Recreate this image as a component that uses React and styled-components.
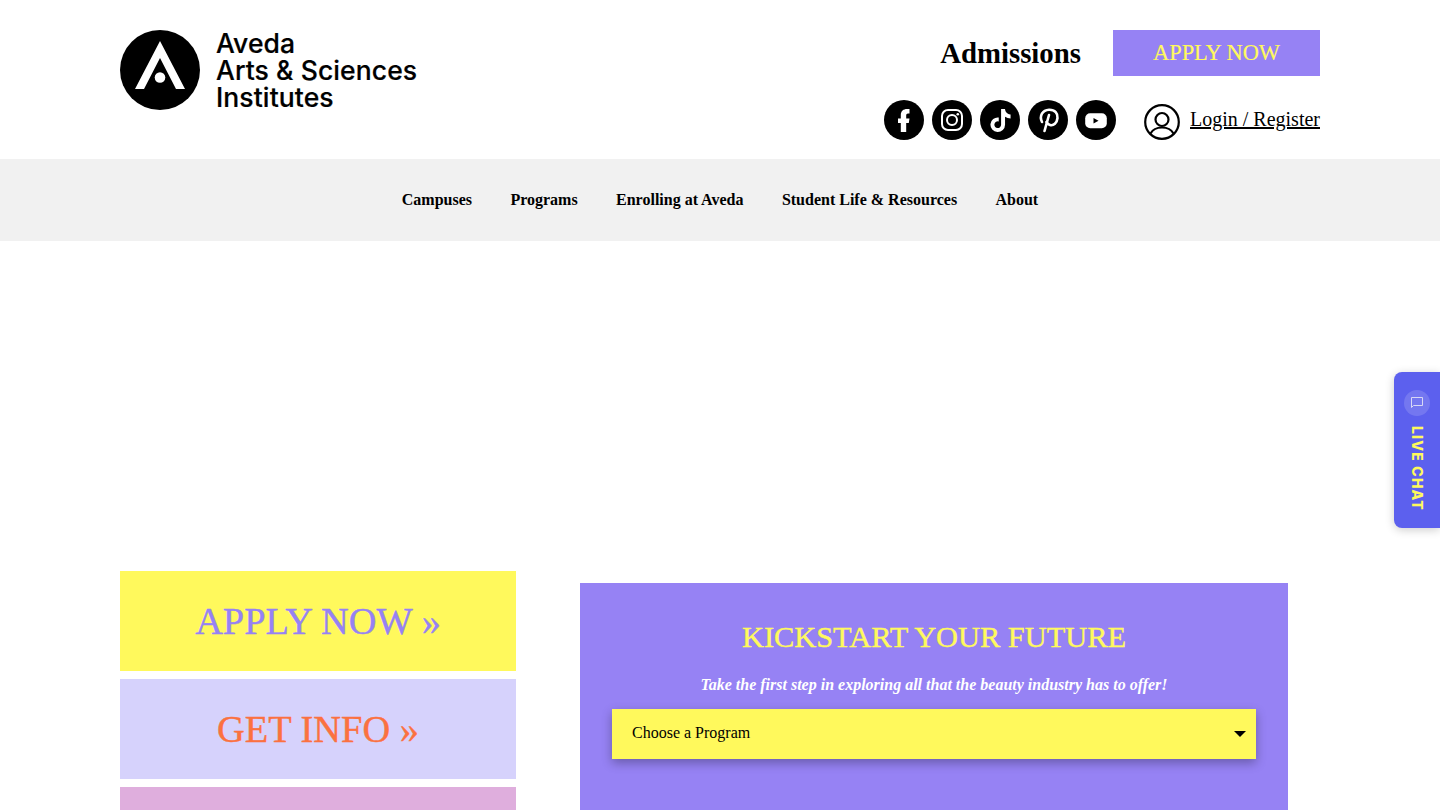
import React from "react";
import styled, { createGlobalStyle } from "styled-components";
import { FaTiktok } from "react-icons/fa";

const Global = createGlobalStyle`
  html, body {
    margin: 0;
    padding: 0;
    background: #fff;
    font-family: "Liberation Serif", "Times New Roman", serif;
    color: #000;
  }
`;

const Page = styled.div`
  height: 810px;
  overflow: hidden;
  position: relative;
`;

const Header = styled.header`
  width: 1200px;
  height: 159px;
  margin: 0 auto;
  display: flex;
  justify-content: space-between;
`;

const Brand = styled.a`
  display: flex;
  align-items: center;
  gap: 16px;
  height: 80px;
  margin-top: 30px;
`;

const BrandName = styled.div`
  font-family: Inter, "Liberation Sans", sans-serif;
  font-weight: 500;
  font-size: 26.5px;
  line-height: 27px;
  letter-spacing: 0.1px;
  color: #000;
  -webkit-text-stroke: 0.2px #000;
`;

const HeaderRight = styled.div`
  display: flex;
  flex-direction: column;
  align-items: flex-end;
  padding-top: 30px;
  gap: 24px;
`;

const TopRow = styled.div`
  display: flex;
  align-items: center;
  gap: 32px;
`;

const AdmissionsLink = styled.a`
  font-size: 28.8px;
  font-weight: bold;
`;

const ApplyButton = styled.a`
  width: 207px;
  height: 46px;
  display: flex;
  align-items: center;
  justify-content: center;
  background: #9682f4;
  color: #fff95c;
  font-size: 22.4px;
  -webkit-text-stroke: 0.2px #fff95c;
`;

const BottomRow = styled.div`
  display: flex;
  align-items: center;
`;

const Socials = styled.div`
  display: flex;
  gap: 8px;
  margin-right: 28px;
`;

const Social = styled.a`
  width: 40px;
  height: 40px;
  border-radius: 50%;
  background: #000;
  color: #fff;
  display: flex;
  align-items: center;
  justify-content: center;
  font-size: 23px;
`;

const Login = styled.a`
  display: flex;
  align-items: center;
  gap: 10px;
  font-size: 20px;
  color: #000;
`;

const UserSvg = styled.svg`
  margin-top: 3px;
`;

const LoginText = styled.span`
  text-decoration: underline;
  margin-bottom: 2px;
`;

const Nav = styled.nav`
  height: 82px;
  background: #f1f1f1;
  display: flex;
  align-items: center;
  justify-content: center;
  gap: 38.4px;
`;

const NavItem = styled.a`
  font-size: 16px;
  font-weight: bold;
`;

const Content = styled.main`
  width: 1200px;
  margin: 330px auto 0;
  display: flex;
  align-items: flex-start;
  gap: 64px;
`;

const Cta = styled.div`
  display: flex;
  flex-direction: column;
  gap: 8px;
  width: 396px;
`;

const CtaBox = styled.a`
  height: 100px;
  display: flex;
  align-items: center;
  justify-content: center;
  background: ${(p) => p.$bg};
  color: ${(p) => p.$color};
  font-size: 38.4px;
  -webkit-text-stroke: 0.4px ${(p) => p.$color};
`;

const Panel = styled.section`
  width: 708px;
  height: 400px;
  margin-top: 12px;
  padding: 32px;
  box-sizing: border-box;
  background: #9682f4;
`;

const PanelTitle = styled.h2`
  margin: 0;
  text-align: center;
  font-size: 30.4px;
  font-weight: normal;
  line-height: 44px;
  color: #fff95c;
  -webkit-text-stroke: 0.4px #fff95c;
`;

const PanelText = styled.p`
  margin: 17px 0 0;
  text-align: center;
  font-size: 16px;
  line-height: 18px;
  font-weight: bold;
  font-style: italic;
  color: #fff;
`;

const Select = styled.div`
  height: 50px;
  margin-top: 15px;
  padding: 0 10px 2px 20px;
  box-sizing: border-box;
  display: flex;
  align-items: center;
  justify-content: space-between;
  background: #fff95c;
  font-size: 16px;
  box-shadow: 0 4px 10px rgba(0, 0, 0, 0.3);
`;

const Caret = styled.span`
  width: 0;
  height: 0;
  margin-top: 2px;
  border-left: 6px solid transparent;
  border-right: 6px solid transparent;
  border-top: 6px solid #000;
`;

const Chat = styled.div`
  position: absolute;
  right: 0;
  top: 372px;
  width: 46px;
  height: 156px;
  box-sizing: border-box;
  padding-top: 18px;
  background: #5c60ee;
  border-radius: 8px 0 0 8px;
  box-shadow: 0 2px 10px rgba(0, 0, 0, 0.2);
  display: flex;
  flex-direction: column;
  align-items: center;
  gap: 10px;
`;

const ChatIcon = styled.span`
  width: 26px;
  height: 26px;
  border-radius: 50%;
  background: rgba(255, 255, 255, 0.15);
  display: flex;
  align-items: center;
  justify-content: center;
`;

const ChatLabel = styled.span`
  writing-mode: vertical-rl;
  font-family: Inter, "Liberation Sans", sans-serif;
  font-size: 14px;
  font-weight: 800;
  letter-spacing: 1.2px;
  color: #fff95c;
`;

const LogoMark = () => (
  <svg width="80" height="80" viewBox="0 0 80 80">
    <circle cx="40" cy="40" r="40" fill="#000" />
    <path d="M40 11 L65 59 H56 L40 28 L24 59 H15 Z" fill="#fff" />
    <circle cx="40" cy="47.5" r="5.3" fill="#fff" />
  </svg>
);

const UserIcon = () => (
  <UserSvg width="36" height="36" viewBox="0 0 36 36" fill="none" stroke="#000" strokeWidth="2.2">
    <circle cx="18" cy="18" r="16.8" />
    <circle cx="18" cy="15.5" r="6.5" />
    <path d="M6.5 29.5 C9 25 13 23.5 18 23.5 C23 23.5 27 25 29.5 29.5" />
  </UserSvg>
);

const FacebookIcon = () => (
  <svg width="40" height="40" viewBox="0 0 40 40" fill="#fff">
    <path d="M16.8 32 V23 H14 V18.5 H16.8 V15 C16.8 11 19.5 9 23 9 H25.5 V13.5 H24 C22.8 13.5 22.2 14.2 22.2 15.5 V18.5 H25.5 L24.8 23 H22.2 V32 Z" />
  </svg>
);

const InstagramIcon = () => (
  <svg width="40" height="40" viewBox="0 0 40 40" fill="none" stroke="#fff" strokeWidth="2">
    <rect x="10" y="10" width="20" height="20" rx="6" />
    <circle cx="20" cy="20" r="5" />
    <circle cx="25.8" cy="14.2" r="1.3" fill="#fff" stroke="none" />
  </svg>
);

const PinterestIcon = () => (
  <svg width="40" height="40" viewBox="0 0 40 40" fill="none" stroke="#fff" strokeWidth="2.6" strokeLinecap="round">
    <path d="M14 22 C11 16 14.5 10 21 9.7 C27 9.5 30 13.5 29.5 18 C29 23 25.5 26 22 25 C20 24.5 19 23.5 18.5 22" />
    <path d="M21 15 L16.5 31" />
  </svg>
);

const YoutubeIcon = () => (
  <svg width="40" height="40" viewBox="0 0 40 40">
    <rect x="9.2" y="13.3" width="21.6" height="15" rx="5" fill="#fff" />
    <path d="M17.5 18 L22.5 20.8 L17.5 23.6 Z" fill="#000" />
  </svg>
);

const navItems = ["Campuses", "Programs", "Enrolling at Aveda", "Student Life & Resources", "About"];

const App = () => {
  return (
    <Page>
      <Global />
      <Header>
        <Brand>
          <LogoMark />
          <BrandName>
            Aveda
            <br />
            Arts &amp; Sciences
            <br />
            Institutes
          </BrandName>
        </Brand>
        <HeaderRight>
          <TopRow>
            <AdmissionsLink>Admissions</AdmissionsLink>
            <ApplyButton>APPLY NOW</ApplyButton>
          </TopRow>
          <BottomRow>
            <Socials>
              <Social><FacebookIcon /></Social>
              <Social><InstagramIcon /></Social>
              <Social><FaTiktok /></Social>
              <Social><PinterestIcon /></Social>
              <Social><YoutubeIcon /></Social>
            </Socials>
            <Login>
              <UserIcon />
              <LoginText>Login / Register</LoginText>
            </Login>
          </BottomRow>
        </HeaderRight>
      </Header>
      <Nav>
        {navItems.map((item) => (
          <NavItem key={item}>{item}</NavItem>
        ))}
      </Nav>
      <Content>
        <Cta>
          <CtaBox $bg="#fff95c" $color="#9682f4">APPLY NOW »</CtaBox>
          <CtaBox $bg="#d6d2fc" $color="#fb7140">GET INFO »</CtaBox>
          <CtaBox $bg="#dfaedd" $color="#000" />
        </Cta>
        <Panel>
          <PanelTitle>KICKSTART YOUR FUTURE</PanelTitle>
          <PanelText>Take the first step in exploring all that the beauty industry has to offer!</PanelText>
          <Select>
            Choose a Program
            <Caret />
          </Select>
        </Panel>
      </Content>
      <Chat>
        <ChatIcon>
          <svg width="14" height="14" viewBox="0 0 14 14" fill="none" stroke="#d8d8f5" strokeWidth="1">
            <path d="M1.5 1.5 H12.5 V9.5 H3.5 L1.5 11.5 Z" />
          </svg>
        </ChatIcon>
        <ChatLabel>LIVE CHAT</ChatLabel>
      </Chat>
    </Page>
  );
};

export default App;
